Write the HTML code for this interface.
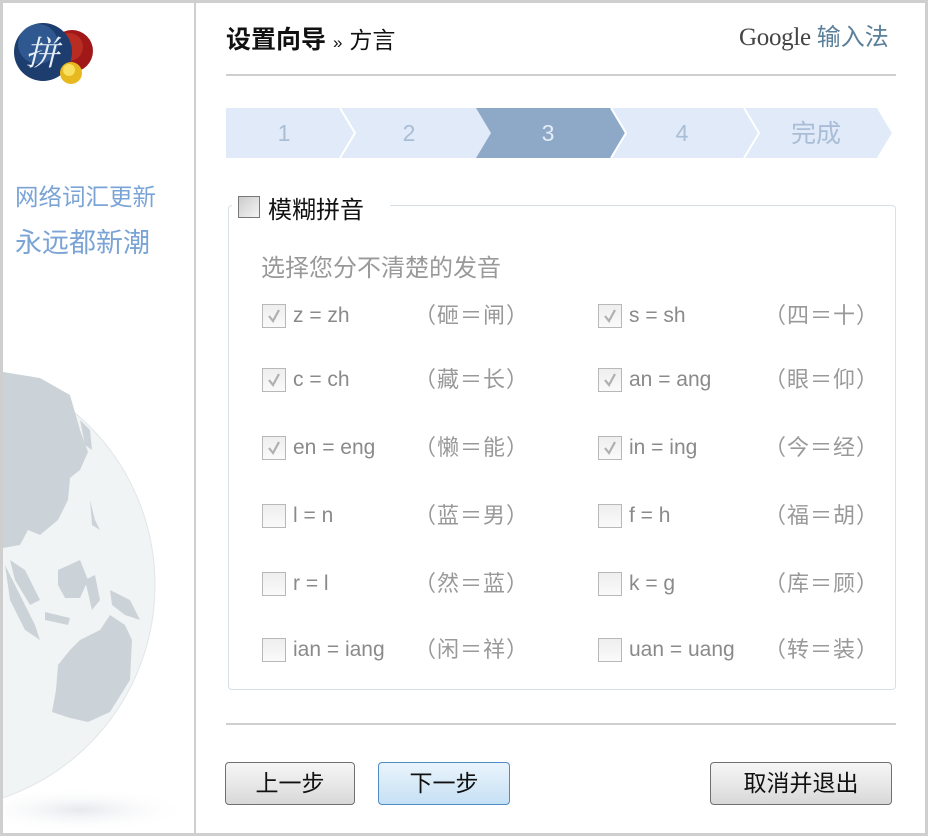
<!DOCTYPE html>
<html><head><meta charset="utf-8"><style>
*{margin:0;padding:0;box-sizing:border-box}
body{width:928px;height:836px;overflow:hidden;background:#fff;font-family:"Liberation Sans","Noto Sans CJK SC",sans-serif;position:relative}
.a{position:absolute;white-space:nowrap}
.frame{position:absolute;left:0;top:0;width:928px;height:836px;border:3px solid #cfcfcf;border-top-width:3px}
.cb{position:absolute;width:24px;height:24px;border:1px solid #b8b8b8;background:linear-gradient(#eee,#fafafa)}
.cb svg{position:absolute;left:3px;top:3px}
.t{position:absolute;font-size:21px;color:#8a8a8a;white-space:nowrap;line-height:24px}
.btn{position:absolute;height:43px;border:1px solid #707070;border-radius:4px;background:linear-gradient(#f6f6f6 0%,#e8e8e8 50%,#d8d8d8 100%);font-size:23px;color:#111;text-align:center;line-height:41px}
</style></head><body>
<div class="frame"></div>
<div class="a" style="left:194px;top:0;width:2px;height:836px;background:#cfcfcf"></div>
<svg class="a" style="left:3px;top:340px" width="190" height="493" viewBox="3 340 190 493">
<defs><radialGradient id="sh" cx="0.5" cy="0.5" r="0.5"><stop offset="0" stop-color="#e6e8ec"/><stop offset="1" stop-color="#fff" stop-opacity="0"/></radialGradient></defs>
<ellipse cx="80" cy="810" rx="110" ry="22" fill="url(#sh)"/>
<circle cx="-70" cy="585" r="225" fill="#f1f4f4" stroke="#e0e6e6"/>
<path d="M3,372 L40,378 L70,395 L80,430 L88,452 L80,470 L70,478 L68,500 L58,520 L40,535 L28,530 L20,545 L3,548Z" fill="#ccd3d8"/>
<path d="M10,560 L25,570 L40,600 L30,605 L15,580Z M5,565 L20,595 L35,625 L40,640 L25,630 L10,600Z" fill="#ccd3d8"/>
<path d="M58,570 L80,560 L88,580 L80,598 L65,598 L58,585Z M85,580 L95,575 L100,600 L92,610Z M110,590 L130,600 L140,620 L125,615 L112,605Z M45,612 L70,618 L68,625 L45,620Z" fill="#ccd3d8"/>
<path d="M80,640 L100,630 L110,615 L125,625 L132,640 L130,680 L110,712 L88,722 L70,718 L52,712 L56,690 L58,665 L70,650Z" fill="#ccd3d8"/>
<path d="M80,420 L90,430 L92,450 L85,445Z M90,500 L95,520 L100,530 L92,525Z" fill="#ccd3d8"/>
</svg>
<svg class="a" style="left:12px;top:22px" width="88" height="66">
<circle cx="60" cy="29" r="21" fill="#a01818"/><circle cx="57" cy="25" r="14" fill="#c83a2a" opacity=".6"/>
<circle cx="31" cy="30" r="29" fill="#1c3d6e"/><circle cx="26" cy="22" r="20" fill="#3a6aa5" opacity=".6"/>
<text x="13" y="43" font-size="34" fill="#e8eef6" font-family="Noto Serif CJK SC,serif" font-style="italic">拼</text>
<circle cx="59" cy="51" r="11" fill="#e8b820"/><circle cx="57" cy="48" r="6" fill="#f8e060"/>
</svg>
<div class="a" style="left:15px;top:178px;font-size:23.5px;color:#7ba4d6">网络词汇更新</div>
<div class="a" style="left:15px;top:221px;font-size:27px;color:#7ba4d6">永远都新潮</div>
<div class="a" style="left:226px;top:20px;font-size:25px;font-weight:bold;color:#111">设置向导 <span style="font-weight:normal;font-size:17px">»</span> <span style="font-weight:normal;font-size:23px">方言</span></div>
<div class="a" style="left:739px;top:17px;font-size:25px;color:#444;font-family:'Liberation Serif',serif;letter-spacing:-0.3px">Google <span style="font-family:'Liberation Sans','Noto Sans CJK SC',sans-serif;color:#5a7f9a;font-size:24px;letter-spacing:0">输入法</span></div>
<div class="a" style="left:226px;top:74px;width:670px;height:2px;background:#cfcfcf"></div>
<svg class="a" style="left:226px;top:108px" width="670" height="50">
<rect width="670" height="50" fill="#e0eaf8"/>
<path d="M250,0 L385,0 L400,25 L385,50 L250,50 L265,25Z" fill="#8ea9c8"/>
<path d="M114,0 L129,25 L114,50 M385,0 L400,25 L385,50 M518,0 L533,25 L518,50 M652,0 L667,25 L652,50" stroke="#fff" stroke-width="2" fill="none"/>
<path d="M652,0 L670,0 L670,50 L652,50 L667,25Z" fill="#fff"/>
<g font-size="23" fill="#a9bdd6" font-family="Liberation Sans,Noto Sans CJK SC,sans-serif" text-anchor="middle">
<text x="58" y="33">1</text><text x="183" y="33">2</text><text x="322" y="33" fill="#e4ecf6">3</text><text x="456" y="33">4</text><text x="590" y="34" font-size="25">完成</text></g>
</svg>
<div class="a" style="left:228px;top:205px;width:668px;height:485px;border:1px solid #d6e0e6;border-radius:4px"></div>
<div class="a" style="left:232px;top:192px;width:158px;height:28px;background:#fff"></div>
<div class="cb" style="left:238px;top:196px;border-color:#777;width:22px;height:22px;background:linear-gradient(135deg,#ccc,#f4f4f4)"></div>
<div class="a" style="left:268px;top:190px;font-size:24px;color:#111">模糊拼音</div>
<div class="a" style="left:261px;top:248px;font-size:24px;color:#999">选择您分不清楚的发音</div>
<div id="rows"></div>
<script>
var r=[["z = zh","（砸＝闸）","s = sh","（四＝十）",1,316],["c = ch","（藏＝长）","an = ang","（眼＝仰）",1,380],["en = eng","（懒＝能）","in = ing","（今＝经）",1,448],["l = n","（蓝＝男）","f = h","（福＝胡）",0,516],["r = l","（然＝蓝）","k = g","（库＝顾）",0,584],["ian = iang","（闲＝祥）","uan = uang","（转＝装）",0,650]];
var h="",ck='<svg width="16" height="16"><path d="M3,8 L7,13 L13,2" stroke="#b0b0b0" stroke-width="2.2" fill="none"/></svg>';
r.forEach(function(x){var y=x[5];
[[262,293,414,0],[598,629,764,2]].forEach(function(c){
h+='<div class="cb" style="left:'+c[0]+'px;top:'+(y-12)+'px">'+(x[4]?ck:'')+'</div>';
h+='<div class="t" style="left:'+c[1]+'px;top:'+(y-12)+'px">'+x[c[3]]+'</div>';
h+='<div class="t" style="left:'+c[2]+'px;top:'+(y-12)+'px;font-size:22px;color:#999;letter-spacing:1px">'+x[c[3]+1]+'</div>';});});
document.getElementById("rows").innerHTML=h;
</script>
<div class="a" style="left:226px;top:723px;width:670px;height:2px;background:#cfcfcf"></div>
<div class="btn" style="left:225px;top:762px;width:130px">上一步</div>
<div class="btn" style="left:378px;top:762px;width:132px;border-color:#4f8bc4;background:linear-gradient(#eaf4fc,#c6e0f4)">下一步</div>
<div class="btn" style="left:710px;top:762px;width:182px">取消并退出</div>
</body></html>
